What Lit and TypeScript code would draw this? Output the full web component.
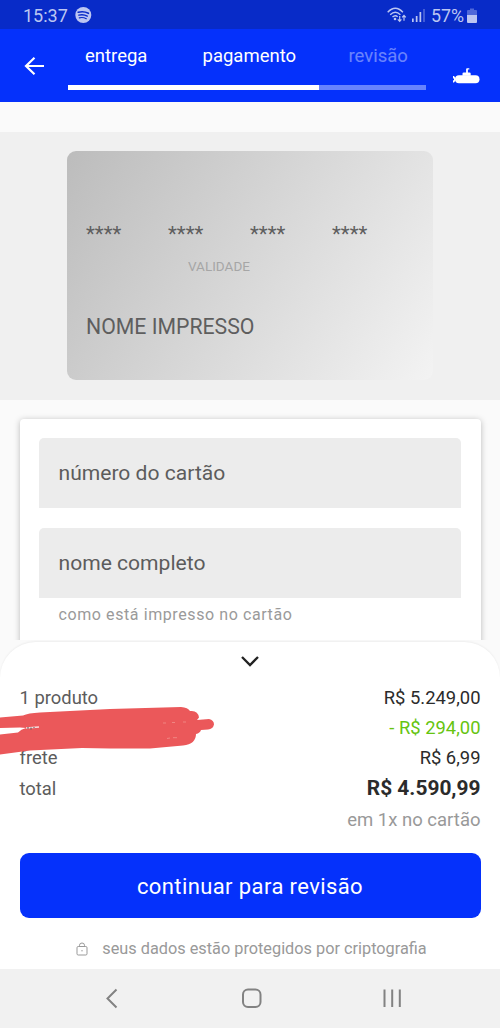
import { LitElement, html, css } from "lit";
import { customElement } from "lit/decorators.js";

@customElement("status-bar")
class StatusBar extends LitElement {
  static styles = css`
    :host { display: flex; height: 29px; background: #082bc8; color: #bcc6f2; align-items: center; padding: 2px 23px 0; box-sizing: border-box; }
    .time { font-size: 18px; line-height: 28px; width: 52px; white-space: nowrap; }
    .right { margin-left: auto; display: flex; align-items: center; }
    .pct { font-size: 17.800px; line-height: 28px; margin-left: 5px; width: 34px; white-space: nowrap; }
    svg { display: block; }
    .bat { margin-left: 2px; }
    .sig { margin-left: 5px; }
  `;
  render() {
    return html`
      <span class="time">15:37</span>
      <svg width="17" height="17" viewBox="0 0 17 17"><circle cx="8.300" cy="8" r="8" fill="currentColor"/>
        <g fill="none" stroke="#082bc8" stroke-linecap="round"><path d="M3.200 5.300q5.400-1.500 10.200 1" stroke-width="1.600"/><path d="M3.800 8.100q4.600-1.200 8.500 1" stroke-width="1.400"/><path d="M4.300 10.800q3.800-.9 7 .9" stroke-width="1.200"/></g></svg>
      <div class="right">
        <svg width="20" height="17" viewBox="0 0 20 17"><g fill="none" stroke="currentColor" stroke-width="1.400"><path d="M.7 5.200Q8.300-2.800 15.900 5.200M3.200 7.700q5.100-5 10.200 0M5.500 10.100q2.600-2.500 5.200-.4"/></g><circle cx="8" cy="12" r="1.300" fill="currentColor"/><path d="M12.700 9v5.200m-1.900-1.800 1.900 2 1.700-2M17 13.800V8.600m-1.800 1.800 1.800-2 1.800 2" fill="none" stroke="currentColor" stroke-width="1.200"/></svg>
        <svg class="sig" width="14" height="15" viewBox="0 0 14 15" fill="currentColor"><rect x="0" y="10.500" width="1.700" height="3.500"/><rect x="3.800" y="8" width="1.700" height="6"/><rect x="7.500" y="4" width="1.700" height="10"/><rect x="11.200" y="1" width="1.600" height="13" opacity=".4"/></svg>
        <span class="pct">57%</span>
        <svg class="bat" width="10" height="16" viewBox="0 0 10 16" fill="currentColor"><path d="M3 .5h4v1.500h2q1 0 1 1v4H0V3q0-1 1-1h2z" opacity=".4"/><path d="M0 7h10v7q0 1-1 1H1q-1 0-1-1z"/></svg>
      </div>`;
  }
}

@customElement("step-header")
class StepHeader extends LitElement {
  static styles = css`
    :host { display: flex; height: 73px; background: #0531fb; box-sizing: border-box; color: #fff; align-items: flex-start; }
    .back { width: 68px; flex: none; padding: 27px 0 0 24px; box-sizing: border-box; }
    .mid { width: 358px; flex: none; padding-top: 15px; }
    .labels { display: flex; height: 24px; line-height: 24px; font-size: 18.500px; padding-left: 17px; white-space: nowrap; }
    .l1 { width: 117.500px; }
    .l2 { width: 146px; }
    .l3 { opacity: .4; }
    .bar { margin-top: 17px; height: 5px; background: #6783fd; }
    .fill { height: 5px; width: 251px; background: #fff; }
    .sub { padding: 38px 0 0 27px; }
    svg { display: block; }
  `;
  render() {
    return html`
      <div class="back"><svg width="21" height="20" viewBox="0 0 21 20"><path d="M20 10H2.500M10.500 1.800 2 10l8.500 8.200" fill="none" stroke="#fff" stroke-width="2.200"/></svg></div>
      <div class="mid">
        <div class="labels"><span class="l1">entrega</span><span class="l2">pagamento</span><span class="l3">revisão</span></div>
        <div class="bar"><div class="fill"></div></div>
      </div>
      <div class="sub"><svg width="28" height="18" viewBox="0 0 28 18" fill="#fff"><rect x="2" y="8.200" width="24.500" height="8" rx="4"/><path d="M9.500 8.800V6.500q0-1 1.300-1h2.300V2.200q0-1 1-1h2.200v1.400h-1.400V5.500h1.500q1.300 0 1.300 1v2.300zM0 9h1l1.500 2v2.500L1 15.500H0v-2.300h1v-1.800H0z"/></svg></div>`;
  }
}

@customElement("card-preview")
class CardPreview extends LitElement {
  static styles = css`
    :host { display: block; background: #f0f0f0; height: 268px; padding: 19.500px 67px 0; box-sizing: border-box; }
    .card { height: 229px; border-radius: 9px; background: linear-gradient(122deg, #bcbcbc, #f3f3f3); padding: 65px 19px 0; box-sizing: border-box; color: #5e5e5e; }
    .num { display: flex; height: 40px; line-height: 36px; font-size: 20.500px; }
    .num span { width: 82px; }
    .val { margin-left: 102px; font-size: 13.500px; line-height: 20px; color: #a6a6a6; }
    .name { margin-top: 37px; font-size: 21.250px; line-height: 28px; }
  `;
  render() {
    return html`<div class="card">
      <div class="num">${[0, 1, 2, 3].map(() => html`<span>****</span>`)}</div>
      <div class="val">VALIDADE</div>
      <div class="name">NOME IMPRESSO</div>
    </div>`;
  }
}

@customElement("card-form")
class CardForm extends LitElement {
  static styles = css`
    :host { display: block; height: 240.500px; overflow: hidden; padding: 19.500px 19.500px 0; box-sizing: border-box; }
    .panel { background: #fff; height: 260px; border-radius: 4px; box-shadow: 0 1px 6px rgba(0,0,0,.26); padding: 19.300px 19.500px; box-sizing: border-box; }
    .field { height: 70px; line-height: 69px; background: #ececec; border-radius: 5px 5px 0 0; padding-left: 19.500px; font-size: 21.080px; color: #5c5c5c; margin-bottom: 19.500px; }
    .field.second { margin-bottom: 5px; }
    .hint { padding-left: 19.500px; font-size: 16px; line-height: 24px; letter-spacing: .59px; color: #9a9a9a; }
  `;
  render() {
    return html`<div class="panel">
      <div class="field">número do cartão</div>
      <div class="field second">nome completo</div>
      <div class="hint">como está impresso no cartão</div>
    </div>`;
  }
}

@customElement("order-summary")
class OrderSummary extends LitElement {
  static styles = css`
    :host { display: block; position: relative; height: 327px; margin-top: 2px; background: #fff; border-radius: 36px 36px 0 0; box-sizing: border-box; padding: 13px 19.500px 0; box-shadow: 0 -1px 2px rgba(0,0,0,.05); }
    svg { display: block; }
    .chev { display: flex; justify-content: center; height: 28px; }
    .row { display: flex; justify-content: space-between; height: 29.750px; line-height: 29.750px; font-size: 18.400px; color: #2b2b2b; }
    .lab { color: #5c5c5c; }
    .green { color: #66c410; }
    .total { height: 33px; line-height: 33px; }
    .total b { font-size: 20.900px; }
    .inst { text-align: right; font-size: 18.500px; color: #999; line-height: 30px; height: 30px; }
    .btn { margin-top: 17.500px; height: 65px; line-height: 67px; border-radius: 9px; background: #0531fb; color: #fff; font-size: 22px; letter-spacing: .4px; text-align: center; }
    .safe { display: flex; justify-content: center; align-items: center; margin-top: 19.500px; height: 24px; line-height: 24px; font-size: 16.300px; color: #999; gap: 14px; white-space: nowrap; padding-left: 3px; }
    .scribble { position: absolute; left: 0; top: 59px; }
  `;
  render() {
    return html`
      <div class="chev"><svg width="20" height="14" viewBox="0 0 20 14"><path d="M2 2l8 8 8-8" fill="none" stroke="#222" stroke-width="2.300"/></svg></div>
      <div class="row"><span class="lab">1 produto</span><span>R$ 5.249,00</span></div>
      <div class="row"><span></span><span class="green">- R$ 294,00</span></div>
      <div class="row"><span class="lab">frete</span><span>R$ 6,99</span></div>
      <div class="row total"><span class="lab">total</span><b>R$ 4.590,99</b></div>
      <div class="inst">em 1x no cartão</div>
      <div class="btn">continuar para revisão</div>
      <div class="safe"><svg width="12" height="14" viewBox="0 0 12 14" fill="none" stroke="#999"><rect x="1" y="4.500" width="10" height="8.500" rx="1.200"/><path d="M3.500 4.500V3.300a2.500 2.300 0 0 1 5 0v1.200"/><circle cx="6" cy="8.800" r=".7" fill="#999" stroke="none"/></svg><span>seus dados estão protegidos por criptografia</span></div>
      <svg class="scribble" width="220" height="60" viewBox="0 701 220 60">
        <path fill="#eb585a" d="M0 717.500 23 715.500Q28 713 40 712.500L110 709 181 707Q188 707.500 190 711 198 710 199 717.500L197 720 209 719Q214 720 214 724.500 213 729 208 729.500L201 730Q200 733 196 734 196 744 183 745.500L150 748.500H110L82 748 30 750.500 0 754.500V734.500L18 732.500Q21 729 26 728L20 727.500 0 728z"/>
        <path d="M26 728 39 727" stroke="#fbdcdc" stroke-width="1.600"/><path d="M28 727v1.800M31 727.500v2M34 727v1" stroke="#555" stroke-width="1"/>
        <path d="M163 723h3m6-.5h3m8-.5h3M167 738.500l3-.5m3-.3h4" stroke="#f08a87" stroke-width=".9"/>
      </svg>`;
  }
}

@customElement("nav-bar")
class NavBar extends LitElement {
  static styles = css`
    :host { display: block; height: 59px; background: #f1f1f1; }
    svg { display: block; }
  `;
  render() {
    return html`<svg width="500" height="59" viewBox="0 969 500 59" fill="none" stroke="#828282" stroke-width="2">
      <path d="M116.500 989.500 107.500 998.500l9 9"/><rect x="243" y="989.500" width="17.500" height="17.500" rx="5"/>
      <path d="M384.500 989.500v17.500M392.200 989.500v17.500M399.800 989.500v17.500"/></svg>`;
  }
}

@customElement("app-root")
class AppRoot extends LitElement {
  static styles = css`
    :host { display: flex; flex-direction: column; width: 500px; height: 1028px; overflow: hidden; background: #fafafa; font-family: Roboto, "Liberation Sans", sans-serif; }
    :host > * { flex: none; }
    .gap { height: 29.500px; }
  `;
  render() {
    return html`<status-bar></status-bar><step-header></step-header><div class="gap"></div>
      <card-preview></card-preview><card-form></card-form><order-summary></order-summary><nav-bar></nav-bar>`;
  }
}
